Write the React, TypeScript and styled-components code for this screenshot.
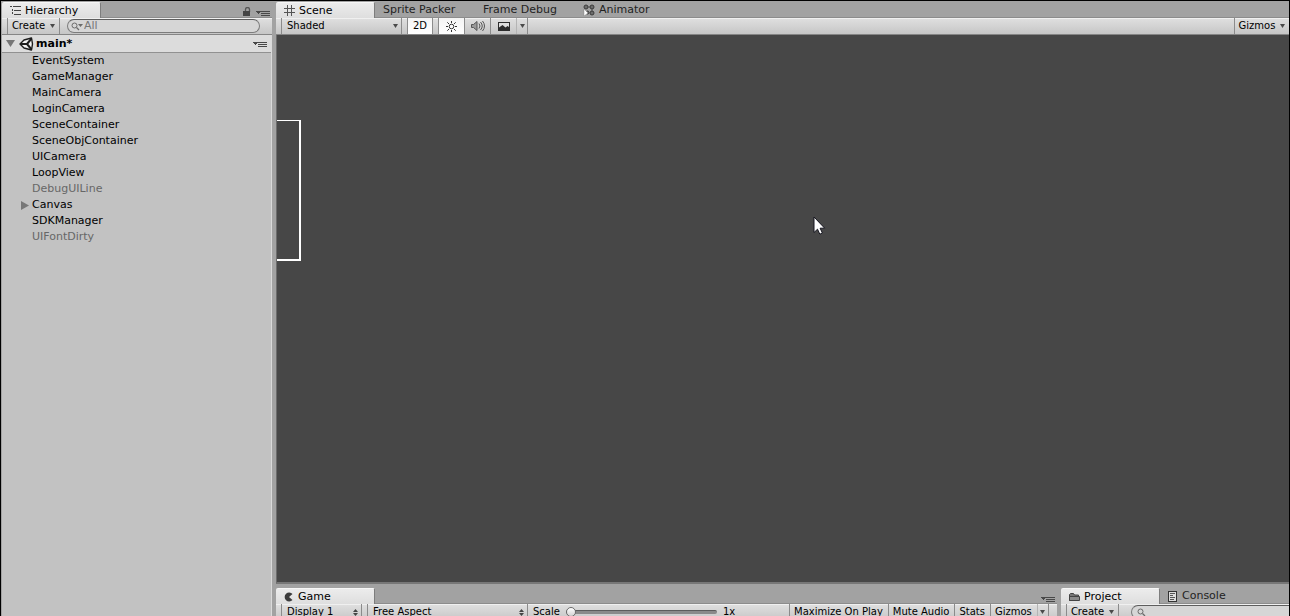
import React from "react";
import styled, { createGlobalStyle, css } from "styled-components";

const GlobalStyle = createGlobalStyle`
  *, *::before, *::after { box-sizing: border-box; }
  html, body { margin: 0; background: #a2a2a2; }
  body { overflow: hidden; }
  button, input, select {
    font: inherit;
    color: inherit;
    margin: 0;
    padding: 0;
    border: 0;
    border-radius: 0;
    background: none;
    outline: 0;
  }
  svg { display: block; flex: none; }
`;

const Editor = styled.div`
  display: grid;
  grid-template-columns: 270px minmax(0, 1fr);
  column-gap: 4px;
  height: 100vh;
  padding-left: 1px;
  border: solid #000;
  border-width: 1px 1px 0;
  background: #a2a2a2;
  color: #111;
  font-family: "DejaVu Sans", Verdana, sans-serif;
  font-size: 11px;
  line-height: 16px;
  overflow: hidden;
`;

const Column = styled.div`
  display: flex;
  flex-direction: column;
  min-width: 0;
  min-height: 0;
`;

const Dock = styled.section<{ $grow?: boolean }>`
  display: flex;
  flex-direction: column;
  min-width: 0;
  min-height: 0;
  flex: ${(p) => (p.$grow ? "1" : "none")};
`;

const BottomRow = styled.div`
  display: grid;
  grid-template-columns: minmax(0, 1fr) 228px;
  column-gap: 4px;
  flex: none;
  height: 32px;
  padding-top: 3px;
  overflow: hidden;
`;

const TabBar = styled.div`
  display: flex;
  align-items: flex-end;
  flex: none;
  height: 16px;
`;

const Tabs = styled.div`
  position: relative;
  z-index: 1;
  display: flex;
  align-items: flex-end;
  margin-bottom: -1px;
`;

const Tab = styled.button<{ $active?: boolean }>`
  display: flex;
  align-items: center;
  gap: 4px;
  height: 16px;
  min-width: 100px;
  padding: 0 8px;
  white-space: nowrap;
  color: #222;
  ${(p) =>
    p.$active &&
    css`
      min-width: 99px;
      color: #000;
      background: linear-gradient(#ececec, #dedede);
      border-top: 1px solid #f6f6f6;
      border-right: 1px solid #7d7d7d;
      border-radius: 2px 2px 0 0;
    `}
`;

const TabTools = styled.div`
  display: flex;
  align-items: flex-end;
  gap: 5px;
  margin-left: auto;
  padding-right: 2px;
`;

const IconButton = styled.button`
  display: flex;
`;

const Toolbar = styled.div`
  display: flex;
  flex: none;
  height: 18px;
  padding-left: 5px;
  border-top: 1px solid #8c8c8c;
  border-bottom: 1px solid #858585;
  background: linear-gradient(#e0e0e0, #c6c6c6);
  box-shadow: inset 0 1px #f0f0f0;
  font-size: 10px;
  color: #000;
`;

const Group = styled.div<{ $gap?: boolean; $right?: boolean }>`
  display: flex;
  border-left: 1px solid #8b8b8b;
  margin-left: ${(p) => (p.$right ? "auto" : p.$gap ? "5px" : "0")};
`;

const ToolButton = styled.button<{ $on?: boolean; $width?: number; $divider?: "faint" | "none" }>`
  display: flex;
  align-items: center;
  justify-content: ${(p) => (p.$width ? "center" : "flex-start")};
  gap: 5px;
  width: ${(p) => (p.$width ? `${p.$width}px` : "auto")};
  padding: ${(p) => (p.$width ? "0" : "0 5px 0 4px")};
  border-right: ${(p) =>
    p.$divider === "none" ? "0" : p.$divider === "faint" ? "1px solid #b4b4b4" : "1px solid #8b8b8b"};
  background: ${(p) => (p.$on ? "linear-gradient(#f4f4f4, #fff)" : "none")};
  white-space: nowrap;
`;

const Picker = styled.div<{ $width: number }>`
  display: grid;
  align-items: center;
  width: ${(p) => p.$width}px;
  padding: 0 3px 0 5px;
  border-right: 1px solid #8b8b8b;
  > * {
    grid-area: 1 / 1;
  }
  svg {
    justify-self: end;
    pointer-events: none;
  }
  select {
    appearance: none;
    width: 100%;
  }
`;

const SearchBox = styled.label<{ $wide?: boolean }>`
  display: flex;
  align-items: center;
  flex: 1;
  min-width: 0;
  height: 14px;
  margin: ${(p) => (p.$wide ? "1px 0 1px 12px" : "1px 12px 1px 7px")};
  padding-left: ${(p) => (p.$wide ? "5px" : "3px")};
  gap: 1px;
  border: 1px solid #7c7c7c;
  border-top-color: #5e5e5e;
  border-radius: ${(p) => (p.$wide ? "7px 0 0 7px" : "7px")};
  border-right-width: ${(p) => (p.$wide ? "0" : "1px")};
  background: #d6d6d6;
  color: #777;
  font-size: 11px;
  input {
    flex: 1;
    min-width: 0;
    height: 12px;
    line-height: 12px;
  }
  input::placeholder {
    color: #777;
    opacity: 1;
  }
`;

const ScaleField = styled.div`
  display: flex;
  align-items: center;
  gap: 6px;
  width: 261px;
  padding-left: 5px;
  input {
    appearance: none;
    width: 151px;
    height: 12px;
  }
  input::-webkit-slider-runnable-track {
    height: 4px;
    border-radius: 2px;
    border-top: 1px solid #5c5c5c;
    background: #8a8a8a;
  }
  input::-webkit-slider-thumb {
    appearance: none;
    width: 10px;
    height: 10px;
    margin-top: -4px;
    border: 1px solid #6b6b6b;
    border-radius: 50%;
    background: linear-gradient(#fff, #d2d2d2);
  }
`;

const HierarchyPane = styled.div`
  flex: 1;
  min-height: 0;
  background: #c2c2c2;
  border-right: 1px solid #dadada;
`;

const SceneHeader = styled.div`
  display: flex;
  align-items: center;
  gap: 2px;
  height: 18px;
  padding: 0 4px 0 3px;
  border-bottom: 1px solid #919191;
  background: #dcdcdc;
  color: #000;
  font-weight: bold;
  > :last-child {
    margin-left: auto;
  }
`;

const Tree = styled.ul`
  list-style: none;
  margin: 0;
  padding: 0;
`;

const TreeRow = styled.li<{ $inactive?: boolean }>`
  display: flex;
  align-items: center;
  height: 16px;
  padding-left: 18px;
  color: ${(p) => (p.$inactive ? "#676767" : "#000")};
`;

const Expander = styled.button`
  display: flex;
  width: 12px;
`;

const SceneView = styled.main`
  position: relative;
  flex: 1;
  min-height: 0;
  background: #474747;
  border-left: 1px solid #6c6c6c;
  border-bottom: 2px solid #777;
  overflow: hidden;
`;

const CanvasOutline = styled.div`
  position: absolute;
  left: 0;
  top: 85px;
  width: 24px;
  height: 141px;
  border: solid #fff;
  border-width: 1px 2px 2px 0;
`;

const Pointer = styled.div`
  position: absolute;
  left: 536px;
  top: 181px;
`;

const MenuIcon = () => (
  <svg width="14" height="8" viewBox="0 0 14 8" shapeRendering="crispEdges">
    <path d="M0 2h5v1h-1v1h-1v1h-1v-1h-1v-1h-1z M5 2h9v1h-9z M5 4h9v1h-9z M5 6h9v1h-9z" fill="#484848" />
  </svg>
);

const LockIcon = () => (
  <svg width="9" height="10" viewBox="0 0 9 10">
    <path d="M3.500 5V2.500a2 2 0 0 1 4 0V5" fill="none" stroke="#555" strokeWidth="1.300" />
    <path d="M1 4h7v5H1z" fill="#444" />
  </svg>
);

const ListIcon = () => (
  <svg width="11" height="9" viewBox="0 0 11 9" shapeRendering="crispEdges" fill="#444">
    <path d="M0 0h2v1H0z M3 0h8v1H3z M2 3h1v2H2z M4 4h7v1H4z M2 6h1v2H2z M4 8h7v1H4z" />
  </svg>
);

const GridIcon = () => (
  <svg width="11" height="11" viewBox="0 0 11 11" shapeRendering="crispEdges" fill="#555">
    <path d="M3 0h1v11H3z M7 0h1v11H7z M0 3h11v1H0z M0 7h11v1H0z" />
  </svg>
);

const AnimatorIcon = () => (
  <svg width="12" height="12" viewBox="0 0 12 12">
    <path d="M3 3h6v6" fill="none" stroke="#555" />
    <g fill="#6c6c6c" stroke="#3a3a3a">
      <circle cx="3" cy="3" r="2" />
      <circle cx="9" cy="3" r="2" />
      <circle cx="9" cy="9" r="2" />
      <circle cx="4.500" cy="8.500" r="1.500" />
    </g>
    <path d="M1 5 5 9 1 12z" fill="#fff" stroke="#777" strokeWidth=".4" />
  </svg>
);

const DownIcon = () => (
  <svg width="5" height="5" viewBox="0 0 5 5">
    <path d="M0 0h5L2.500 4z" fill="#4a4a4a" />
  </svg>
);

const UpDownIcon = () => (
  <svg width="5" height="7" viewBox="0 0 5 7">
    <path d="M0 3h5L2.500 0z M0 4h5L2.500 7z" fill="#444" />
  </svg>
);

const SunIcon = () => (
  <svg width="13" height="13" viewBox="0 0 13 13" fill="none" stroke="#333">
    <circle cx="6.500" cy="6.500" r="2.300" />
    <path d="M6.500 1v2M6.500 10v2M1 6.500h2M10 6.500h2M2.300 2.300l1.700 1.700M9 9l1.700 1.700M10.700 2.300 9 4M4 9l-1.700 1.700" />
  </svg>
);

const SpeakerIcon = () => (
  <svg width="14" height="12" viewBox="0 0 14 12" fill="none" stroke="#555">
    <path d="M.5 4.500h2l3.500-3v9l-3.500-3h-2z" fill="#999" />
    <path d="M8 3.500q2 2.500 0 5M9.500 2q3.500 4 0 8M11.500 1q4 5 0 10" />
  </svg>
);

const PictureIcon = () => (
  <svg width="12" height="9" viewBox="0 0 12 9">
    <path d="M0 0h12v9H0z" fill="#2c2c2c" />
    <path d="M1 1h10v4L9.500 4 7.500 5.500 4.500 3 1 5.500z" fill="#dedede" />
  </svg>
);

const UnityIcon = () => (
  <svg width="15" height="14" viewBox="0 0 15 14" fill="none" stroke="#1c1c1c" strokeLinejoin="round">
    <path d="M1 7 5 3 12.500 1 13.500 7 12.500 13 5 11z" fill="#f2f2f2" strokeWidth="1.400" />
    <path d="M1 7h7M8 7 12.500 1.500M8 7l4.500 5.500" strokeWidth="2" />
  </svg>
);

const SearchIcon = ({ menu }: { menu?: boolean }) => (
  <svg width={menu ? 12 : 9} height="9" viewBox={menu ? "0 0 12 9" : "0 0 9 9"}>
    <circle cx="3.500" cy="3.500" r="2.500" fill="none" stroke="#6a6a6a" />
    <path d="M5.500 5.500 8 8" stroke="#6a6a6a" strokeWidth="1.300" />
    {menu && <path d="M7 2h5L9.500 5z" fill="#6a6a6a" />}
  </svg>
);

const TriangleIcon = ({ open }: { open?: boolean }) => (
  <svg width="10" height="9" viewBox="0 0 10 9">
    <path d={open ? "M1 1h9L5.500 8z" : "M1 0v9L9 4.500z"} fill="#777" />
  </svg>
);

const GameIcon = () => (
  <svg width="10" height="10" viewBox="0 0 10 10">
    <path d="M8.500 2A4.500 4.500 0 1 0 8.500 8L5 5z" fill="#3c3c3c" />
  </svg>
);

const FolderIcon = () => (
  <svg width="11" height="10" viewBox="0 0 11 10">
    <path d="M.5 8.500v-6l1-1h3l1 1.500h4v5.500z" fill="#777" stroke="#444" />
    <path d="M.5 8.500v-4h10v4z" fill="#8a8a8a" stroke="#444" />
  </svg>
);

const ConsoleIcon = () => (
  <svg width="10" height="11" viewBox="0 0 10 11" shapeRendering="crispEdges">
    <path d="M.5.500h8v10h-8z" fill="#ddd" stroke="#333" />
    <path d="M2 2h5v1H2z M2 4h3v1H2z M2 6h5v1H2z M2 8h4v1H2z" fill="#555" />
  </svg>
);

const CursorIcon = () => (
  <svg width="13" height="20" viewBox="0 0 13 20">
    <path d="M1 1v15.500l3.500-3.300 2.300 5 2.600-1.200-2.300-4.800h4.600z" fill="#fff" stroke="#15151f" />
  </svg>
);

const objects = [
  { name: "EventSystem" },
  { name: "GameManager" },
  { name: "MainCamera" },
  { name: "LoginCamera" },
  { name: "SceneContainer" },
  { name: "SceneObjContainer" },
  { name: "UICamera" },
  { name: "LoopView" },
  { name: "DebugUILine", inactive: true },
  { name: "Canvas", parent: true },
  { name: "SDKManager" },
  { name: "UIFontDirty", inactive: true },
];

const CreateButton = () => (
  <Group>
    <ToolButton $width={52}>
      Create <DownIcon />
    </ToolButton>
  </Group>
);

export default function App() {
  return (
    <>
      <GlobalStyle />
      <Editor>
        <Column>
          <Dock $grow>
            <TabBar>
              <Tabs role="tablist">
                <Tab $active role="tab" aria-selected="true">
                  <ListIcon /> Hierarchy
                </Tab>
              </Tabs>
              <TabTools>
                <IconButton aria-label="Lock"><LockIcon /></IconButton>
                <IconButton aria-label="Hierarchy menu"><MenuIcon /></IconButton>
              </TabTools>
            </TabBar>
            <Toolbar>
              <CreateButton />
              <SearchBox>
                <SearchIcon menu />
                <input type="text" placeholder="All" aria-label="Search hierarchy" />
              </SearchBox>
            </Toolbar>
            <HierarchyPane>
              <SceneHeader>
                <Expander aria-label="Collapse main"><TriangleIcon open /></Expander>
                <UnityIcon />
                <span>main*</span>
                <IconButton aria-label="Scene menu"><MenuIcon /></IconButton>
              </SceneHeader>
              <Tree>
                {objects.map((o) => (
                  <TreeRow key={o.name} $inactive={o.inactive}>
                    {o.parent ? (
                      <Expander aria-label={`Expand ${o.name}`}><TriangleIcon /></Expander>
                    ) : (
                      <Expander as="span" />
                    )}
                    {o.name}
                  </TreeRow>
                ))}
              </Tree>
            </HierarchyPane>
          </Dock>
        </Column>
        <Column>
          <Dock $grow>
            <TabBar>
              <Tabs role="tablist">
                <Tab $active role="tab" aria-selected="true"><GridIcon /> Scene</Tab>
                <Tab role="tab" aria-selected="false">Sprite Packer</Tab>
                <Tab role="tab" aria-selected="false">Frame Debug</Tab>
                <Tab role="tab" aria-selected="false"><AnimatorIcon /> Animator</Tab>
              </Tabs>
            </TabBar>
            <Toolbar>
              <Group>
                <Picker $width={120}>
                  <select aria-label="Draw mode"><option>Shaded</option></select>
                  <DownIcon />
                </Picker>
              </Group>
              <Group $gap>
                <ToolButton $on $width={25}>2D</ToolButton>
              </Group>
              <Group $gap>
                <ToolButton $on $width={26} aria-label="Lighting"><SunIcon /></ToolButton>
                <ToolButton $width={26} aria-label="Audio"><SpeakerIcon /></ToolButton>
                <ToolButton $divider="faint" $width={26} aria-label="Effects"><PictureIcon /></ToolButton>
                <ToolButton $width={11} aria-label="Effects menu"><DownIcon /></ToolButton>
              </Group>
              <Group $right>
                <ToolButton $divider="none" $width={54}>Gizmos <DownIcon /></ToolButton>
              </Group>
            </Toolbar>
            <SceneView>
              <CanvasOutline />
              <Pointer><CursorIcon /></Pointer>
            </SceneView>
          </Dock>
          <BottomRow>
            <Dock>
              <TabBar>
                <Tabs role="tablist">
                  <Tab $active role="tab" aria-selected="true"><GameIcon /> Game</Tab>
                </Tabs>
                <TabTools>
                  <IconButton aria-label="Game menu"><MenuIcon /></IconButton>
                </TabTools>
              </TabBar>
              <Toolbar>
                <Group>
                  <Picker $width={80}>
                    <select aria-label="Display"><option>Display 1</option></select>
                    <UpDownIcon />
                  </Picker>
                </Group>
                <Group $gap>
                  <Picker $width={160}>
                    <select aria-label="Aspect"><option>Free Aspect</option></select>
                    <UpDownIcon />
                  </Picker>
                </Group>
                <ScaleField>
                  <label htmlFor="scale">Scale</label>
                  <input id="scale" type="range" min="1" max="5" defaultValue="1" />
                  <output htmlFor="scale">1x</output>
                </ScaleField>
                <Group>
                  <ToolButton>Maximize On Play</ToolButton>
                  <ToolButton>Mute Audio</ToolButton>
                  <ToolButton>Stats</ToolButton>
                  <ToolButton $divider="faint">Gizmos</ToolButton>
                  <ToolButton $width={11} aria-label="Gizmos menu"><DownIcon /></ToolButton>
                </Group>
              </Toolbar>
            </Dock>
            <Dock>
              <TabBar>
                <Tabs role="tablist">
                  <Tab $active role="tab" aria-selected="true"><FolderIcon /> Project</Tab>
                  <Tab role="tab" aria-selected="false"><ConsoleIcon /> Console</Tab>
                </Tabs>
              </TabBar>
              <Toolbar>
                <CreateButton />
                <SearchBox $wide>
                  <SearchIcon />
                  <input type="text" aria-label="Search project" />
                </SearchBox>
              </Toolbar>
            </Dock>
          </BottomRow>
        </Column>
      </Editor>
    </>
  );
}
